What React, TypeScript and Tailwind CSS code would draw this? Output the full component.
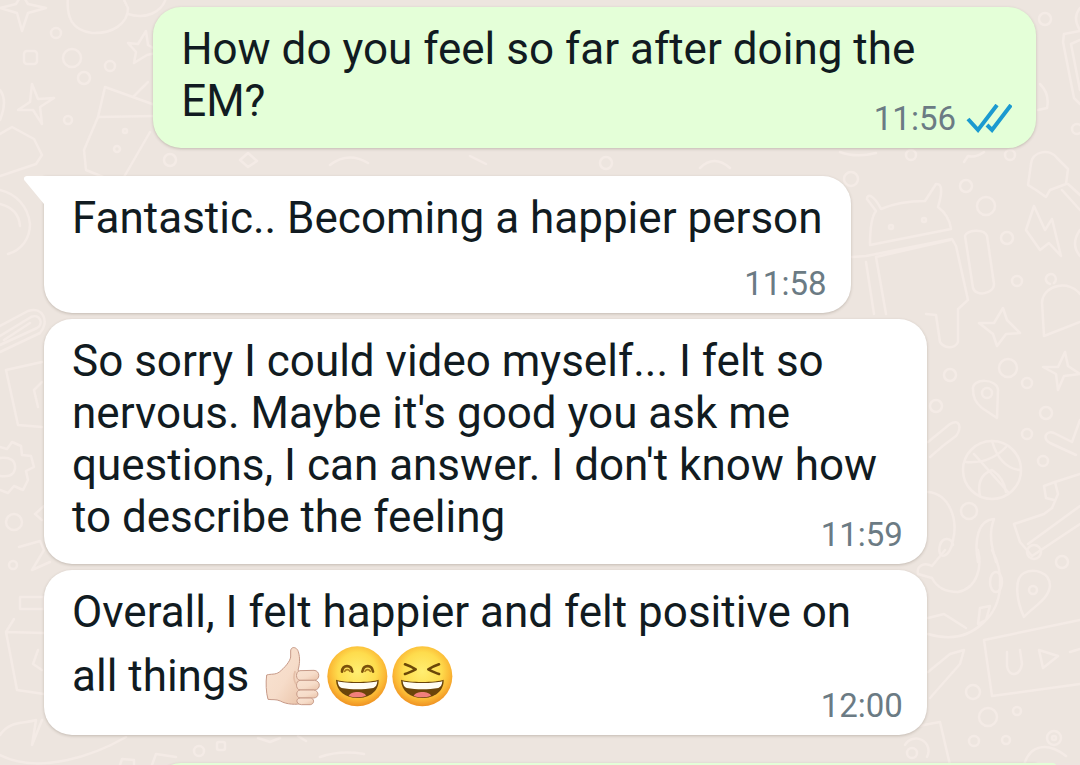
import React from 'react';

const THUMB = (
  <svg viewBox="36 35 183 183" className="size-[61px] shrink-0" role="img" aria-label="thumbs up">
    <defs>
      <linearGradient id="skin" x1="0" y1="0" x2="1" y2="1">
        <stop offset="0" stopColor="#f9e3d2" />
        <stop offset="0.55" stopColor="#f6dcc9" />
        <stop offset="1" stopColor="#eac3a8" />
      </linearGradient>
    </defs>
    <g fill="url(#skin)" stroke="#c79a88" strokeWidth="3" strokeLinejoin="round">
      <path d="M50 122C63 118 76 122 88 113C103 101 120 82 122 68L122 50C122 36 140 36 145 52C151 72 149 90 144 108L158 120L158 206C140 213 108 210 91 200C78 194 66 197 54 195C48 174 47 145 50 122Z" />
      <path d="M150 109L192 108C211 109 211 137 193 138L150 138C136 136 136 111 150 109Z" />
      <path d="M150 138L194 138C213 140 212 166 194 167L150 167C136 165 136 140 150 138Z" />
      <path d="M150 167L191 167C208 169 208 190 191 191L150 191C137 189 137 169 150 167Z" />
      <path d="M150 191L181 191C194 192 194 209 181 211L154 211C137 209 137 193 150 191Z" />
    </g>
    <path d="M135 112C130 125 133 140 137 148" fill="none" stroke="#e5bfa8" strokeWidth="5" strokeLinecap="round" />
  </svg>
);

const Face: React.FC<{ squint?: boolean }> = ({ squint }) => (
  <svg
    viewBox="231 35 183 183"
    className="size-[61px] shrink-0"
    role="img"
    aria-label={squint ? 'grinning squinting face' : 'grinning face with smiling eyes'}
  >
    <defs>
      <radialGradient id="face" cx="0.5" cy="0.42" r="0.58">
        <stop offset="0" stopColor="#ffee72" />
        <stop offset="0.55" stopColor="#fedc4d" />
        <stop offset="0.8" stopColor="#fbb935" />
        <stop offset="1" stopColor="#ef9122" />
      </radialGradient>
    </defs>
    <circle cx="322" cy="126" r="90" fill="url(#face)" />
    {squint ? (
      <g fill="none" stroke="#6b4708" strokeWidth="8" strokeLinecap="round" strokeLinejoin="round">
        <path d="M270 90C279 93 292 99 302 105C292 110 280 116 270 119" />
        <path d="M372 90C363 93 350 99 340 105C350 110 362 116 372 119" />
      </g>
    ) : (
      <g fill="none" stroke="#7a500b" strokeWidth="8" strokeLinecap="round">
        <path d="M276 112C278 90 304 90 307 112" />
        <path d="M337 112C340 90 366 90 369 112" />
        <path d="M284 111C288 104 296 104 300 111M345 111C349 104 357 104 361 111" strokeWidth="5" stroke="#a8781c" />
      </g>
    )}
    <path d="M258 136C278 145 366 145 386 136C387 171 358 191 322 191C287 191 259 171 258 136Z" fill="#6b450a" />
    <path d="M263 141C286 148 359 148 382 141C381 152 377 159 370 161C340 166 304 166 275 161C267 158 264 151 263 141Z" fill="#fffdf4" />
    <path d="M296 185C302 169 342 169 348 184C334 190 311 191 296 185Z" fill="#f17f7b" />
  </svg>
);

const Ticks = () => (
  <svg viewBox="0 0 46 30" className="h-[30px] w-[46px]" fill="none" stroke="#1b9ad0" strokeWidth="4" role="img" aria-label="Read">
    <path d="M2 15L12 26L31 1" />
    <path d="M21 21L26 26L45 1" />
  </svg>
);

const Wallpaper = () => (
  <svg
    viewBox="0 0 1080 765"
    preserveAspectRatio="xMinYMin slice"
    className="absolute inset-0 h-full w-full"
    fill="none"
    stroke="#f4ebe6"
    strokeWidth="2.5"
    strokeLinejoin="round"
    strokeLinecap="round"
    aria-hidden="true"
  >
    {/* top left */}
    <path d="M0 8L16 4L22 -6L28 4L46 8L28 13L22 31L17 13L0 8" />
    <path d="M68 -4C66 18 72 30 92 33C112 34 128 24 128 8L122 -4M128 14C146 20 162 12 166 -2" />
    <rect x="24" y="51" width="13" height="13" rx="3" />
    <circle cx="56" cy="33" r="5" />
    <circle cx="72" cy="58" r="9" />
    <circle cx="84" cy="78" r="6" />
    <circle cx="110" cy="66" r="5" />
    <circle cx="68" cy="120" r="4" />
    <path d="M32 84L38 99L54 98L40 107L42 124L33 110L18 110L30 102Z" />
    <path d="M128 43L138 44L146 31L148 45L160 52L147 55L134 63L136 52Z" />
    <path d="M105 87L98 117L84 150L86 170L120 184L150 132M98 117L155 116M105 87L155 105M134 96L148 82" />
    <circle cx="117" cy="149" r="3" />
    <circle cx="125" cy="131" r="2" />
    <path d="M0 90Q8 100 0 120M0 134L12 127L34 139L42 155L36 164L0 176" />
    <circle cx="170" cy="160" r="6" />

    {/* left edge */}
    <path d="M0 190C16 194 28 206 30 224C30 238 22 250 8 254M0 204C12 207 19 214 20 226" />
    <path d="M0 345L37 328C44 324 40 313 31 317L0 336M0 352L40 333C50 322 43 306 28 311L0 326M4 340L30 323" />
    <path d="M6 370L42 362M6 370L18 425L42 427M34 390L42 382M34 390L38 407" />
    <path d="M0 447L7 449L12 442L21 446L22 455L31 456L34 467L26 471L28 480L23 490L14 486L8 493L0 490M0 458Q16 456 15 469Q13 478 0 476" />
    <circle cx="14" cy="522" r="8" />
    <circle cx="13" cy="565" r="4" />
    <path d="M44 506L35 514L42 520M19 547L40 541L44 550L32 570L50 562" />
    <path d="M20 597H44V609H20ZM6 632L14 619M6 632L44 633M6 632L17 690L44 694M38 650L33 664L42 670" />
    <path d="M0 735C10 720 24 724 36 720L32 745L42 720M0 755C40 775 95 755 126 737" />
    <path d="M152 765L156 754L176 757M258 738l12 4l10 -4M298 736l8 5M320 757Q340 750 364 754" />
    <circle cx="199" cy="751" r="5" />
    <rect x="217" y="742" width="8" height="8" rx="2" />
    <path d="M120 765L122 759L134 760V765" />

    {/* strip under the first message */}
    <path d="M840 152Q856 158 876 153M964 162L968 156Q976 158 984 152" />
    <circle cx="911" cy="155" r="5" />
    <path d="M240 160l8 -7l9 8l-9 6zM330 165q18 -14 38 -2M470 156l16 8M700 168q14 -14 30 0" />
    <circle cx="606" cy="163" r="6" />

    {/* robot */}
    <path d="M870 245C870 226 872 216 876 211L867 199C867 193 874 195 881 209C895 203 911 201 925 201L936 184C943 183 942 194 938 207C946 213 950 221 951 229Z" />
    <circle cx="891" cy="227" r="2" />
    <circle cx="924" cy="220" r="2" />
    <path d="M852 257L866 256L952 239L956 246L968 300L958 309V342C954 350 944 348 940 342L936 315L926 314M876 257L886 314M866 262L874 314M876 257L950 240" />
    <path d="M965 236C966 230 984 228 987 236L994 284C994 294 976 297 973 288Z" />

    {/* right side */}
    <circle cx="851" cy="179" r="7" />
    <circle cx="966" cy="186" r="6" />
    <circle cx="986" cy="206" r="9" />
    <circle cx="1007" cy="238" r="6" />
    <circle cx="1017" cy="281" r="5" />
    <path d="M1031 164C1032 151 1050 148 1057 158L1068 169L1066 184L1050 190L1046 197L1036 190L1028 185ZM1062 190L1080 210M1068 184L1080 195" />
    <path d="M1034 206L1026 230L1040 250L1049 243L1061 256L1052 219L1045 230ZM1080 230Q1070 244 1080 256" />
    <path d="M1044 336L1042 302C1044 284 1070 280 1080 294M1044 336L1080 322M1050 284a5 5 0 1 1 4 -1" />
    <path d="M1003 308L1007 320L1020 333L1006 334L997 346L993 334L979 323L994 323Z" />
    <circle cx="1045" cy="19" r="6" />
    <path d="M1080 8Q1072 18 1080 30M1080 31L1064 34L1063 42L1074 98L1080 104M1080 40L1071 44L1080 90M1040 84Q1050 94 1047 108L1038 110" />
    <circle cx="1077" cy="129" r="5" />
    <circle cx="1010" cy="155" r="5" />
    <circle cx="1008" cy="368" r="9" />
    <path d="M973 389C972 378 997 378 998 390L997 418L982 408C975 402 973 397 973 389Z" />
    <circle cx="987" cy="393" r="5" />
    <circle cx="950" cy="375" r="6" />
    <circle cx="936" cy="406" r="6" />
    <circle cx="1027" cy="383" r="5" />
    <circle cx="1046" cy="413" r="6" />
    <circle cx="1027" cy="434" r="5" />
    <circle cx="1043" cy="461" r="5" />
    <path d="M1065 352L1068 366L1080 374L1064 376L1058 390L1056 374L1043 367L1058 367Z" />
    <path d="M928 442L950 424C960 418 962 428 956 436L944 445L930 457" />
    <circle cx="992" cy="470" r="29" />
    <path d="M974 454L1008 492M966 462Q990 464 1006 447M992 441Q1000 468 1020 470M980 496Q976 476 992 470Q1004 478 1006 492" />
    <path d="M1080 420L1072 442L1054 433C1046 430 1042 438 1050 443L1076 455" />
    <path d="M928 492C950 494 958 520 953 540C950 560 936 560 940 545C943 536 952 538 953 545" />
    <circle cx="969" cy="511" r="8" />
    <path d="M994 519C978 520 974 540 978 562M994 519C988 534 992 548 996 562" />
    <path d="M1044 486L1055 482L1058 494L1052 508M1055 482L1080 474M1044 486L1046 498L1054 500" />
    <path d="M1014 524L1044 514L1052 508M1014 524L1020 542L1032 556L1080 524M1028 544L1080 506" />
    <path d="M978 550C982 566 978 588 958 592C944 592 936 586 932 578L918 574C916 566 924 562 932 566L945 550M992 550C1004 572 1004 604 984 622C968 638 948 640 928 634M928 618L944 614L966 628M980 608L990 606L986 620L978 624Z" />
    <ellipse cx="996" cy="582" rx="6" ry="10" />
    <circle cx="1034" cy="552" r="7" />
    <circle cx="1062" cy="562" r="6" />
    <path d="M1024 617C1016 600 1014 578 1024 573C1034 568 1050 572 1050 586C1048 600 1034 606 1024 617Z" />
    <circle cx="1033" cy="590" r="4" />
    <path d="M1080 620L984 640L992 696L1080 684M1007 652V666C1009 678 1020 676 1022 664L1020 650M1039 650L1058 656L1043 668ZM1070 652L1080 649" />
    <path d="M928 672L950 654L964 650L960 664L930 698" />
    <circle cx="973" cy="692" r="7" />
    <circle cx="988" cy="717" r="9" />
    <circle cx="1017" cy="711" r="4" />
    <circle cx="974" cy="741" r="5" />
    <circle cx="1006" cy="740" r="4" />
    <circle cx="1054" cy="738" r="7" />
    <circle cx="1054" cy="738" r="2" />
    <path d="M918 726L940 722L950 765M905 745a12 12 0 0 1 22 12M1024 765C1030 744 1048 742 1066 756" />
    <circle cx="912" cy="753" r="5" />
  </svg>
);

interface BubbleProps {
  time?: string;
  mine?: boolean;
  wide?: boolean;
  tail?: boolean;
  timeBelow?: boolean;
  className?: string;
  children?: React.ReactNode;
}

const Bubble: React.FC<BubbleProps> = ({ time, mine, wide, tail, timeBelow, className = '', children }) => (
  <article
    className={`relative rounded-[28px] pl-7 pr-6 pt-4 pb-[9px] shadow-[0_1px_3px_rgba(70,60,45,0.25)] ${
      mine ? 'self-end bg-[#e4ffd8]' : 'self-start bg-white'
    } ${wide ? 'w-[89%]' : ''} ${tail ? (mine ? 'rounded-tr-none' : 'rounded-tl-none') : ''} ${className}`}
  >
    {tail && (
      <svg
        viewBox="0 0 22 28"
        className={`absolute top-0 h-7 w-[22px] ${mine ? '-right-5 -scale-x-100 text-[#e4ffd8]' : '-left-5 text-white'}`}
        fill="currentColor"
        aria-hidden="true"
      >
        <path d="M22 0H3C0 0 -1 3 1 5L20 28H22Z" />
      </svg>
    )}
    <div className="pr-1 text-[44px] leading-[52px] text-[#111b21]">{children}</div>
    {time && (
      <div className={`relative flex items-center justify-end gap-[10px] text-[33px] leading-10 text-[#6b7b84] ${timeBelow ? 'mt-5' : '-mt-7'}`}>
        <time>{time}</time>
        {mine && <Ticks />}
      </div>
    )}
  </article>
);

export default function App() {
  return (
    <div className="relative h-screen overflow-hidden bg-[#ede5df] font-[Roboto,sans-serif]">
      <Wallpaper />
      <main className="relative flex flex-col gap-1.5 px-11 pt-[7px]">
        <Bubble mine wide time="11:56">
          How do you feel so far after doing the
          <br />
          EM?
        </Bubble>
        <Bubble tail timeBelow time="11:58" className="mt-[22px]">
          Fantastic.. Becoming a happier person
        </Bubble>
        <Bubble wide time="11:59">
          So sorry I could video myself... I felt so nervous. Maybe it's good you ask me questions, I can answer. I
          don't know how to describe the feeling
        </Bubble>
        <Bubble wide time="12:00">
          Overall, I felt happier and felt positive on
          <div className="flex h-[76px] items-center gap-1">
            <span className="mr-[9px]">all things</span>
            {THUMB}
            <Face />
            <Face squint />
          </div>
        </Bubble>
        <Bubble mine wide tail className="mt-[22px] min-h-24" />
      </main>
    </div>
  );
}
